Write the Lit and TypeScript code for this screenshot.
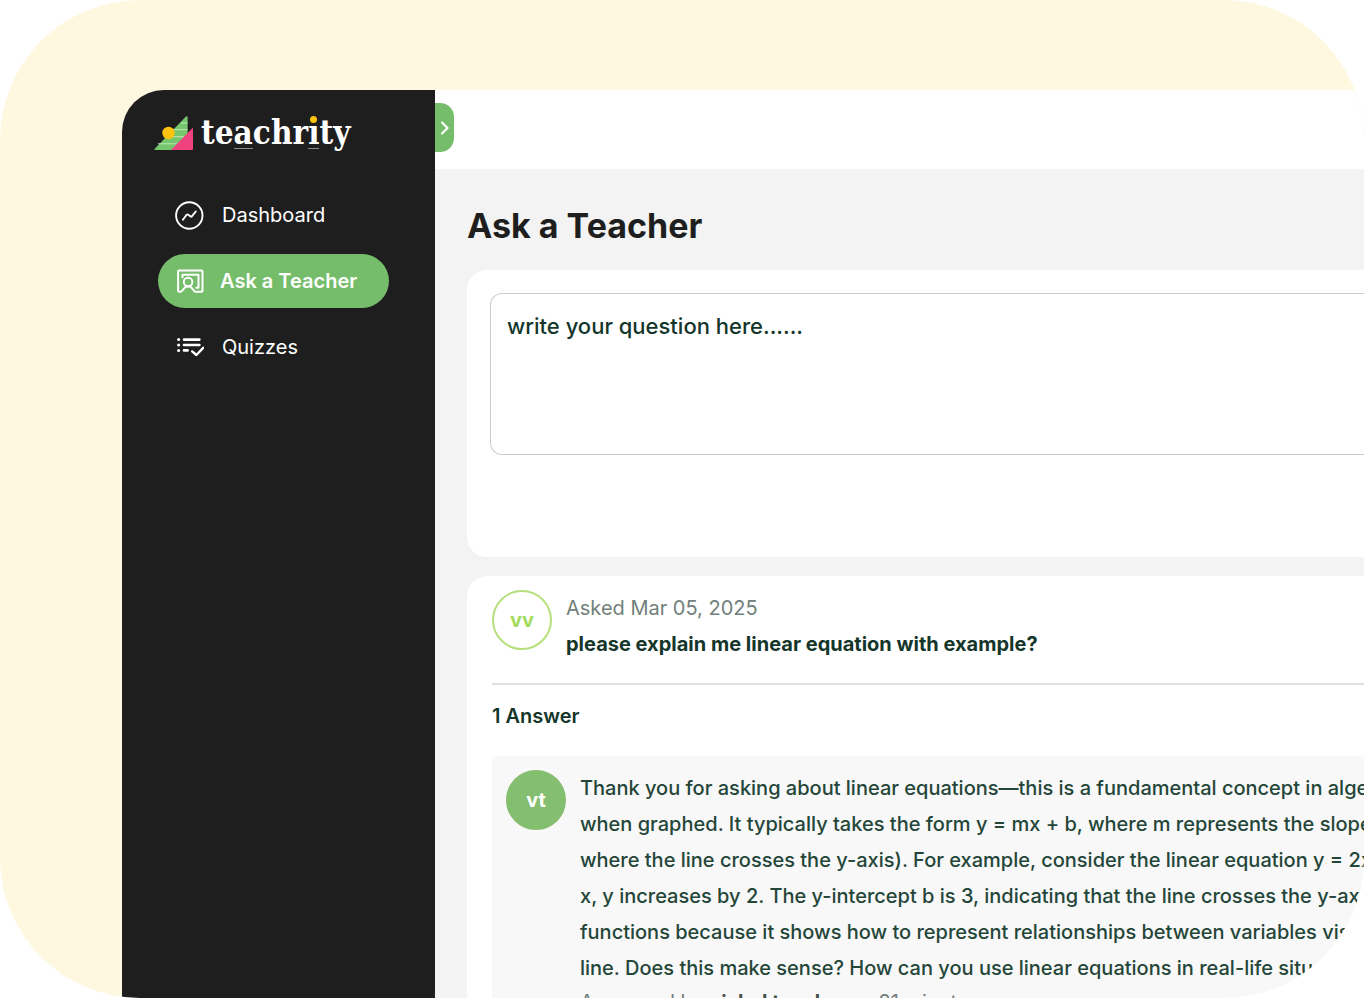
import { LitElement, html, svg, css } from "lit";
import { customElement, property } from "lit/decorators.js";

const dashboardIcon = svg`
  <circle cx="15.300" cy="15.500" r="13.200" fill="none" stroke="currentColor" stroke-width="1.900" />
  <path d="M8.900 19.800 L12.600 14.800 Q13.400 14 14.300 14.700 L16.600 16.500 Q17.400 17 18 16.200 L21.800 11.500" fill="none" stroke="currentColor" stroke-width="1.900" stroke-linecap="round" stroke-linejoin="round" />`;

const teacherIcon = svg`
  <g transform="translate(1.300 -.3)">
    <path d="M5.200 26 H3.800 Q2.800 26 2.800 25 V5.800 Q2.800 4.800 3.800 4.800 H26.200 Q27.200 4.800 27.200 5.800 V25 Q27.200 26 26.200 26 H19.600 L15.800 21.600 Q13 19.400 9.800 21.600 L6.200 25.600 Q5.800 26 5.200 26 Z" fill="none" stroke="currentColor" stroke-width="2" stroke-linejoin="round" />
    <circle cx="12.800" cy="16.400" r="4.300" fill="none" stroke="currentColor" stroke-width="2" />
    <path d="M7.200 11.800 V9 H23.200 V22 H21" fill="none" stroke="currentColor" stroke-width="2" stroke-linecap="round" stroke-linejoin="round" />
  </g>`;

const quizIcon = svg`
  <g transform="translate(1.200 1.200)">
    <path d="M8.800 6.400 H24.200 M8.800 11.800 H24.200 M8.800 17.200 H12.400" fill="none" stroke="currentColor" stroke-width="2.600" stroke-linecap="round" />
    <path d="M17 18.200 L21.200 21.800 L28 14.600" fill="none" stroke="currentColor" stroke-width="2.400" stroke-linecap="round" stroke-linejoin="round" />
    <circle cx="3.400" cy="6.400" r="1.500" fill="currentColor" />
    <circle cx="3.400" cy="11.800" r="1.500" fill="currentColor" />
    <circle cx="3.400" cy="17.200" r="1.500" fill="currentColor" />
  </g>`;

const navItems = [
  { label: "Dashboard", icon: dashboardIcon, active: false },
  { label: "Ask a Teacher", icon: teacherIcon, active: true },
  { label: "Quizzes", icon: quizIcon, active: false },
];

const answerLines = [
  "Thank you for asking about linear equations—this is a fundamental concept in algebra",
  "when graphed. It typically takes the form y = mx + b, where m represents the slope",
  "where the line crosses the y-axis). For example, consider the linear equation y = 2x",
  "x, y increases by 2. The y-intercept b is 3, indicating that the line crosses the y-axis",
  "functions because it shows how to represent relationships between variables visually",
  "line. Does this make sense? How can you use linear equations in real-life situations",
];

@customElement("side-nav")
class SideNav extends LitElement {
  static styles = css`
    :host {
      display: block;
      flex: none;
      box-sizing: border-box;
      width: 313px;
      padding: 20px 0 0 32px;
      background: #1e1e1e;
      color: #fff;
      font-family: Inter, sans-serif;
    }
    .brand {
      display: flex;
      align-items: center;
      gap: 8px;
      height: 46px;
      color: #fff;
      text-decoration: none;
    }
    .mark {
      flex: none;
      width: 39px;
      height: 36px;
    }
    .word {
      font: 700 33px/40px "DejaVu Serif Condensed", "DejaVu Serif", serif;
      font-stretch: condensed;
    }
    .letter {
      position: relative;
    }
    .lined::after {
      content: "";
      position: absolute;
      left: 0;
      right: 0;
      bottom: 3px;
      height: 1px;
      background: #8a8a8a;
    }
    .dotted::before {
      content: "";
      position: absolute;
      left: 2px;
      top: 3px;
      width: 7px;
      height: 7px;
      border-radius: 50%;
      background: #ffc20e;
    }
    .list {
      display: grid;
      justify-items: start;
      gap: 12px;
      margin: 32px 0 0;
      padding: 0 0 0 4px;
      list-style: none;
    }
    .item {
      display: flex;
      align-items: center;
      gap: 18px;
      box-sizing: border-box;
      width: 231px;
      height: 54px;
      padding-left: 16px;
      border-radius: 27px;
      color: #fff;
      font-size: 20px;
      text-decoration: none;
    }
    .active {
      gap: 16px;
      background: #75bd6a;
      font-weight: 600;
    }
    .icon {
      flex: none;
      width: 30px;
      height: 30px;
    }
  `;

  render() {
    return html`
      <a class="brand" href="#">
        <svg class="mark" viewBox="0 0 39 36" aria-hidden="true">
          <path d="M.5 34 32 1.600 Q33.600 .6 33.600 2.400 V35 H1 Q-.2 35 .5 34Z" fill="#75c66c" />
          <path d="M27 8 H33.600 M19 14.700 H33.600 M11 21.700 H30 M4 28.800 H23" stroke="#c3e6bd" stroke-width="1" />
          <path d="M17 35 38 13.500 Q39 12.500 39 14 V34 Q39 35 38 35Z" fill="#f0427f" />
          <circle cx="14.500" cy="18" r="6.200" fill="#ffc20e" />
        </svg>
        <span class="word" aria-label="teachrity"
          >te<span class="letter lined">a</span>chr<span class="letter lined dotted">ı</span>ty</span
        >
      </a>
      <nav>
        <ul class="list">
          ${navItems.map(
            (item) => html`<li>
              <a class="item ${item.active ? "active" : ""}" href="#">
                <svg class="icon" viewBox="0 0 30 30" aria-hidden="true">${item.icon}</svg>
                <span>${item.label}</span>
              </a>
            </li>`
          )}
        </ul>
      </nav>
    `;
  }
}

@customElement("user-avatar")
class UserAvatar extends LitElement {
  @property() initials = "";
  @property({ type: Boolean }) filled = false;

  static styles = css`
    :host {
      display: block;
      flex: none;
    }
    .circle {
      display: grid;
      place-items: center;
      box-sizing: border-box;
      width: 60px;
      height: 60px;
      border: 2px solid #b5e07c;
      border-radius: 50%;
      color: #a4db5e;
      font: 700 20px/24px Inter, sans-serif;
    }
    .filled {
      border-color: #84be70;
      background: #84be70;
      color: #fff;
    }
  `;

  render() {
    return html`<div class="circle ${this.filled ? "filled" : ""}">${this.initials}</div>`;
  }
}

@customElement("app-root")
class AppRoot extends LitElement {
  static styles = css`
    :host {
      display: block;
      background: #fff;
      font-family: Inter, sans-serif;
    }
    .frame {
      display: flex;
      box-sizing: border-box;
      height: 100vh;
      padding: 90px 0 0 122px;
      border-radius: 140px;
      background: #fff8e1;
      overflow: hidden;
    }
    .window {
      display: flex;
      flex: 1;
      min-width: 0;
      border-top-left-radius: 42px;
      background: #f3f3f3;
      overflow: hidden;
    }
    .main {
      flex: 1;
      min-width: 0;
    }
    .topbar {
      box-sizing: border-box;
      height: 79px;
      padding-top: 13px;
      background: #fff;
    }
    .toggle {
      display: grid;
      place-items: center;
      width: 19px;
      height: 49px;
      padding: 0;
      border: 0;
      border-radius: 0 14px 14px 0;
      background: #75bd6a;
    }
    .chevron {
      width: 10px;
      height: 16px;
    }
    .content {
      padding: 36px 0 0 32px;
    }
    .title {
      margin: 0 0 23px;
      color: #1e1e1e;
      font-size: 34px;
      font-weight: 700;
      line-height: 42px;
    }
    .card {
      margin-bottom: 19px;
      border-radius: 20px 0 0 20px;
      background: #fff;
    }
    .ask {
      padding: 23px 0 102px 23px;
    }
    .question {
      display: block;
      box-sizing: border-box;
      width: 100%;
      height: 162px;
      padding: 16px;
      border: 1px solid #ccc;
      border-right: 0;
      border-radius: 12px 0 0 12px;
      background: #fff;
      color: #14352a;
      font: 500 22px/32px Inter, sans-serif;
      resize: none;
    }
    .question::placeholder {
      color: #14352a;
      opacity: 1;
    }
    .thread {
      padding: 14px 0 0 25px;
      color: #14352a;
      font-size: 20px;
      line-height: 36px;
    }
    .asked {
      display: flex;
      gap: 14px;
      padding-bottom: 21px;
      border-bottom: 2px solid #dce2e0;
    }
    .date {
      margin: 0;
      color: #71807a;
    }
    .prompt {
      margin: 0;
      font-size: 20px;
      font-weight: 700;
      line-height: 36px;
    }
    .count {
      margin: 13px 0 22px;
      font-size: 20px;
      font-weight: 600;
      line-height: 36px;
    }
    .answer {
      display: flex;
      gap: 14px;
      padding: 14px 0 14px 14px;
      border-radius: 8px 0 0 0;
      background: #f8f8f8;
      white-space: nowrap;
    }
    .text {
      margin: 0;
      color: #244638;
      font-weight: 500;
    }
    .line {
      display: block;
    }
    .byline {
      margin: 0;
      color: #71807a;
      line-height: 32px;
    }
    .who {
      color: #45524c;
    }
  `;

  render() {
    return html`
      <div class="frame">
        <div class="window">
          <side-nav></side-nav>
          <main class="main">
            <div class="topbar">
              <button class="toggle" type="button" aria-label="Expand menu">
                <svg class="chevron" viewBox="0 0 10 16" aria-hidden="true">
                  <path d="M2 2.500 7.500 8 2 13.500" fill="none" stroke="#fff" stroke-width="2.200" stroke-linecap="round" stroke-linejoin="round" />
                </svg>
              </button>
            </div>
            <div class="content">
              <h1 class="title">Ask a Teacher</h1>
              <section class="card ask">
                <textarea class="question" aria-label="Your question" placeholder="write your question here......"></textarea>
              </section>
              <section class="card thread">
                <div class="asked">
                  <user-avatar initials="vv"></user-avatar>
                  <div>
                    <p class="date">Asked Mar 05, 2025</p>
                    <h2 class="prompt">please explain me linear equation with example?</h2>
                  </div>
                </div>
                <h3 class="count">1 Answer</h3>
                <article class="answer">
                  <user-avatar initials="vt" filled></user-avatar>
                  <div>
                    <p class="text">${answerLines.map((line) => html`<span class="line">${line}</span>`)}</p>
                    <p class="byline">Answered by <b class="who">vishal teacher</b> — 21 minutes ago</p>
                  </div>
                </article>
              </section>
            </div>
          </main>
        </div>
      </div>
    `;
  }
}
